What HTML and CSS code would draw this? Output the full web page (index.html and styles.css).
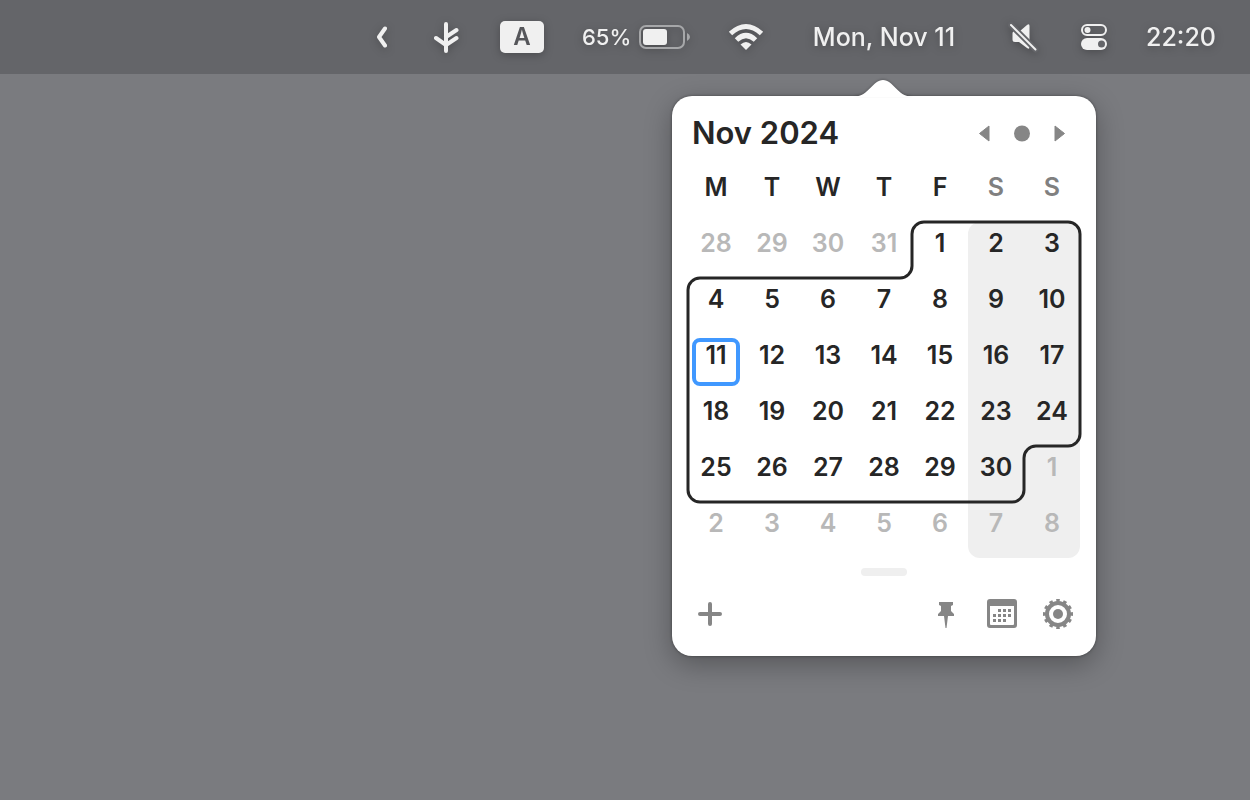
FILE: index.html
```html
<!DOCTYPE html>
<html lang="en">
<head>
    <meta charset="UTF-8">
    <title>Calendar</title>
    <link rel="stylesheet" href="styles.css">
</head>
<body>
<header class="menubar">
    <svg class="chevron" width="24" height="36" viewBox="0 0 24 36"><path d="M15 9.500L9 18L15 26.500"/></svg>
    <svg class="branch" width="32" height="36" viewBox="0 0 32 36"><path d="M16 5v27M16 18l10.500-7M16 26l10.500-7M16 26L6 19"/></svg>
    <div class="input"><span>A</span></div>
    <div class="battery">
        <span>65%</span>
        <svg width="52" height="24" viewBox="0 0 52 24">
            <rect class="shell" x="2" y="1" width="44" height="22" rx="6"/>
            <rect class="level" x="5" y="4" width="24" height="16" rx="3"/>
            <path class="tip" d="M49 8q3 1.500 3 4t-3 4z"/>
        </svg>
    </div>
    <svg class="wifi" width="40" height="28" viewBox="0 0 40 28">
        <path class="arc" d="M4.500 10.500Q20-3.500 35.500 10.500M10.500 17Q20 8 29.500 17"/>
        <path class="dot" d="M14.500 21.500Q20 16.500 25.500 21.500L20 27z"/>
    </svg>
    <div class="date">Mon, Nov 11</div>
    <svg class="mute" width="42" height="36" viewBox="0 0 42 36">
        <path class="speaker" d="M13 12h5l7-6q2.500-2 2.500 1v21q0 3-2.500 1l-8-6h-4q-2.500 0-2.500-2.500v-6q0-2.500 2.500-2.500z"/>
        <path class="gap" d="M9 6L33.500 30.500"/>
        <path class="slash" d="M9 6L33.500 30.500"/>
    </svg>
    <svg class="switches" width="28" height="28" viewBox="0 0 28 28">
        <rect class="off" x="2" y="2" width="24" height="10" rx="5"/>
        <circle class="fill" cx="7.500" cy="7" r="3"/>
        <rect class="fill" x="1" y="15" width="26" height="12" rx="6"/>
        <circle class="hole" cx="21.500" cy="21" r="3.500"/>
    </svg>
    <div class="time">22:20</div>
</header>

<main class="desktop">
    <section class="popover">
        <svg class="arrow" width="56" height="18" viewBox="0 0 56 18"><path d="M0 17.500C13 17.500 18 1 28 1S43 17.500 56 17.500V18H0z"/></svg>
        <div class="head">
            <h1>Nov 2024</h1>
            <div class="nav">
                <button type="button" aria-label="Previous month"><svg width="24" height="24" viewBox="0 0 24 24"><path d="M17 5v15L7.500 12.500z"/></svg></button>
                <button type="button" aria-label="Today"><svg width="24" height="24" viewBox="0 0 24 24"><circle cx="12" cy="12.500" r="8"/></svg></button>
                <button type="button" aria-label="Next month"><svg width="24" height="24" viewBox="0 0 24 24"><path d="M7 5v15l9.500-7.500z"/></svg></button>
            </div>
        </div>
        <div class="month">
            <div class="weekend"></div>
            <table>
                <thead>
                <tr><th>M</th><th>T</th><th>W</th><th>T</th><th>F</th><th class="dim">S</th><th class="dim">S</th></tr>
                </thead>
                <tbody>
                <tr><td class="out">28</td><td class="out">29</td><td class="out">30</td><td class="out">31</td><td>1</td><td>2</td><td>3</td></tr>
                <tr><td>4</td><td>5</td><td>6</td><td>7</td><td>8</td><td>9</td><td>10</td></tr>
                <tr><td class="today"><span>11</span></td><td>12</td><td>13</td><td>14</td><td>15</td><td>16</td><td>17</td></tr>
                <tr><td>18</td><td>19</td><td>20</td><td>21</td><td>22</td><td>23</td><td>24</td></tr>
                <tr><td>25</td><td>26</td><td>27</td><td>28</td><td>29</td><td>30</td><td class="out">1</td></tr>
                <tr><td class="out">2</td><td class="out">3</td><td class="out">4</td><td class="out">5</td><td class="out">6</td><td class="out">7</td><td class="out">8</td></tr>
                </tbody>
            </table>
            <!-- line round the days of the current month -->
            <svg class="outline" width="392" height="280" viewBox="0 0 392 280">
                <path d="M236 0H380a12 12 0 0 1 12 12V212a12 12 0 0 1-12 12H348a12 12 0 0 0-12 12V268a12 12 0 0 1-12 12H12a12 12 0 0 1-12-12V68a12 12 0 0 1 12-12H212a12 12 0 0 0 12-12V12a12 12 0 0 1 12-12z"/>
            </svg>
        </div>
        <div class="handle"></div>
        <div class="tools">
            <button type="button" class="add" aria-label="Add event"><svg width="32" height="32" viewBox="0 0 32 32"><path class="plus" d="M16 6v20M6 16h20"/></svg></button>
            <button type="button" aria-label="Pin"><svg width="32" height="32" viewBox="0 0 32 32"><path d="M9 4h14v3l-2 1v5l3 3v2h-6l-1.500 12h-1L14 18H8v-2l3-3V8L9 7z"/></svg></button>
            <button type="button" aria-label="Open calendar">
                <svg width="32" height="32" viewBox="0 0 32 32">
                    <path fill-rule="evenodd" d="M4 1h24q3 0 3 3v23q0 3-3 3H4q-3 0-3-3V4q0-3 3-3zM4 8v18q0 1 1 1h22q1 0 1-1V8z"/>
                    <path d="M12 11h3v3h-3zM17 11h3v3h-3zM22 11h3v3h-3zM7 16h3v3H7zM12 16h3v3h-3zM17 16h3v3h-3zM22 16h3v3h-3zM7 21h3v3H7zM12 21h3v3h-3zM17 21h3v3h-3z"/>
                </svg>
            </button>
            <button type="button" aria-label="Settings">
                <svg width="32" height="32" viewBox="0 0 32 32">
                    <circle class="teeth" cx="16" cy="16" r="13.500" pathLength="120"/>
                    <circle class="ring" cx="16" cy="16" r="11"/>
                    <circle cx="16" cy="16" r="5"/>
                </svg>
            </button>
        </div>
    </section>
</main>
</body>
</html>
```
FILE: styles.css
```css
* {
    box-sizing: border-box;
    margin: 0;
    padding: 0;
}

body {
    min-height: 100vh;
    background: #7a7b7f;
    font-family: Inter, "Liberation Sans", sans-serif;
    color: #262626;
}

svg {
    display: block;
}

/* menu bar */
.menubar {
    display: flex;
    justify-content: flex-end;
    align-items: center;
    gap: 36px;
    height: 74px;
    padding: 0 34px;
    background: #646569;
    color: #f0f0f0;
    font-size: 25px;
    font-weight: 500;
    white-space: nowrap;
}

.menubar > * {
    flex: none;
    filter: drop-shadow(0 2px 4px rgba(0, 0, 0, 0.25));
}

.chevron path,
.branch path {
    fill: none;
    stroke: #f0f0f0;
    stroke-width: 4;
    stroke-linecap: round;
    stroke-linejoin: round;
}

.input {
    width: 48px;
    padding: 0 2px;
}

.input span {
    display: block;
    height: 32px;
    border-radius: 5px;
    background: #f0f0f0;
    color: #55565a;
    font-size: 24px;
    font-weight: 600;
    line-height: 32px;
    text-align: center;
}

.battery {
    display: flex;
    align-items: center;
    justify-content: space-between;
    width: 108px;
    font-size: 22px;
}

.shell {
    fill: none;
    stroke: #a6a7a9;
    stroke-width: 2;
}

.level,
.wifi .dot,
.switches .fill,
.speaker {
    fill: #f0f0f0;
}

.tip {
    fill: #a6a7a9;
}

.wifi .arc {
    fill: none;
    stroke: #f0f0f0;
    stroke-width: 5;
}

.date {
    width: 164px;
    text-align: center;
}

.gap,
.slash {
    stroke: #646569;
    stroke-width: 6;
    stroke-linecap: round;
}

.slash {
    stroke: #f0f0f0;
    stroke-width: 2;
}

.off {
    fill: none;
    stroke: #f0f0f0;
    stroke-width: 2;
}

.hole {
    fill: #646569;
}

.time {
    width: 72px;
    text-align: right;
}

/* calendar popover */
.desktop {
    display: flex;
    justify-content: flex-end;
    padding: 22px 154px 40px;
}

.popover {
    position: relative;
    width: 424px;
    padding: 16px 16px 4px;
    border-radius: 20px;
    background: #fff;
    box-shadow: 0 0 3px rgba(0, 0, 0, 0.4), 0 8px 28px rgba(0, 0, 0, 0.3);
}

.arrow {
    position: absolute;
    top: -17px;
    left: 183px;
    fill: #fff;
    filter: drop-shadow(0 -1px 1px rgba(0, 0, 0, 0.2));
}

.head {
    display: flex;
    justify-content: space-between;
    align-items: center;
    height: 42px;
    padding: 0 8px 0 4px;
}

h1 {
    font-size: 31px;
    font-weight: 600;
    line-height: 36px;
}

.nav {
    display: flex;
    gap: 14px;
}

button {
    border: 0;
    background: none;
    cursor: pointer;
}

button svg {
    fill: #868686;
}

.nav path {
    stroke: #868686;
    stroke-width: 1;
    stroke-linejoin: round;
}

.month {
    position: relative;
}

.weekend {
    position: absolute;
    top: 68px;
    right: 0;
    bottom: 0;
    width: 112px;
    border-radius: 12px;
    background: #efefef;
}

table {
    position: relative;
    width: 100%;
    border-collapse: collapse;
    table-layout: fixed;
    font-size: 25px;
}

th {
    height: 68px;
    font-weight: 600;
    line-height: 66px;
    vertical-align: top;
}

td {
    height: 56px;
    font-weight: 600;
    line-height: 42px;
    text-align: center;
    vertical-align: top;
}

.dim {
    color: #808080;
}

.out {
    color: #b8b8b8;
}

.today span {
    display: block;
    height: 48px;
    margin: 4px;
    border: 4px solid #4098ff;
    border-radius: 8px;
    line-height: 26px;
}

.outline {
    position: absolute;
    top: 68px;
    left: 0;
    overflow: visible;
    fill: none;
    stroke: #262626;
    stroke-width: 3;
}

.handle {
    width: 46px;
    height: 8px;
    margin: 10px auto 0;
    border-radius: 4px;
    background: #efefef;
}

.tools {
    display: flex;
    align-items: center;
    gap: 24px;
    height: 76px;
    padding: 0 6px;
}

.add {
    margin-right: auto;
}

.plus {
    stroke: #868686;
    stroke-width: 4;
    stroke-linecap: round;
}

.teeth {
    fill: none;
    stroke: #868686;
    stroke-width: 3;
    stroke-dasharray: 5 5;
    stroke-dashoffset: 2.5;
}

.ring {
    fill: none;
    stroke: #868686;
    stroke-width: 4;
}
```
